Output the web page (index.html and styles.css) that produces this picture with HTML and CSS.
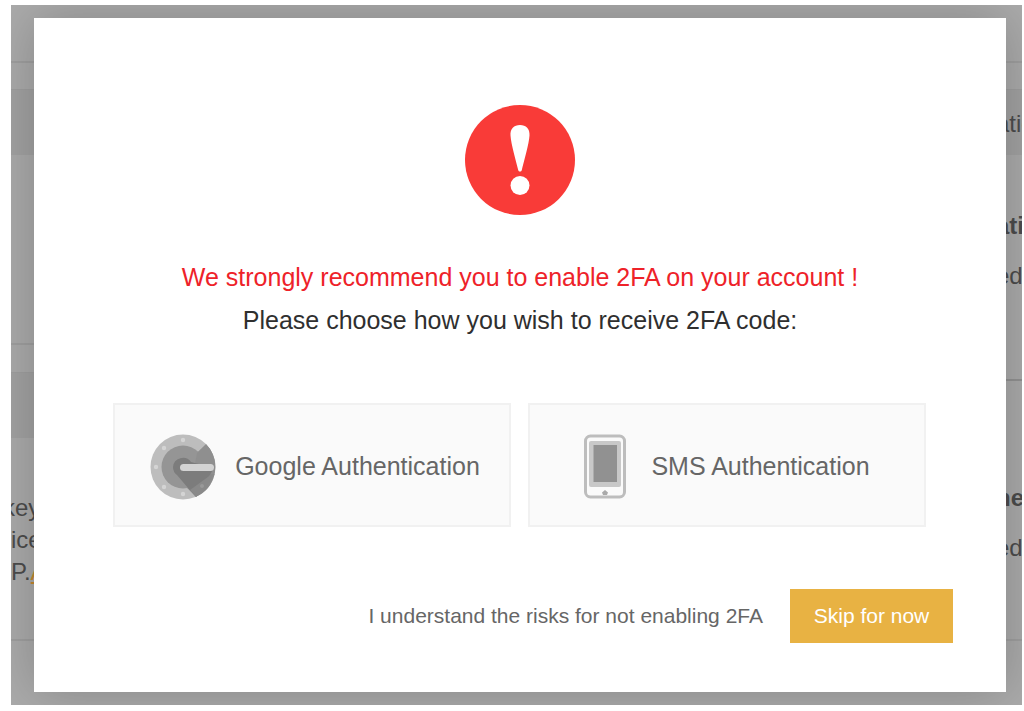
FILE: index.html
```html
<!DOCTYPE html>
<html lang="en">
<head>
<meta charset="utf-8">
<title>Enable 2FA</title>
<link rel="stylesheet" href="styles.css">
</head>
<body>
<div class="screen">
  <div class="page" aria-hidden="true">
    <div class="topbar"></div>
    <div class="column">
      <section class="panel panel-first">
        <div class="panel-head"></div>
      </section>
      <section class="panel panel-second">
        <div class="panel-head"></div>
        <p class="note">key<br>ice<br>P.<span class="note-link">A</span></p>
      </section>
    </div>
    <div class="column column-right">
      <section class="panel">
        <div class="panel-head">ation</div>
        <div class="entry"><b>ation</b><span>ed</span></div>
        <div class="entry entry-last"><b>ne</b><span>ed</span></div>
      </section>
    </div>
  </div>
  <main class="modal" role="dialog" aria-labelledby="title">
    <svg class="alert" viewBox="0 0 110 110" aria-hidden="true">
      <circle cx="55" cy="55" r="55" fill="#f93b38"/>
      <path d="M55 20c6 0 10 4 9.500 10.500C64 39 59 56 56.800 65c-.5 2-3.100 2-3.600 0C51 56 46 39 45.500 30.500 45 24 49 20 55 20z" fill="#fff"/>
      <circle cx="55" cy="80.500" r="9.500" fill="#fff"/>
    </svg>
    <h1 class="title" id="title">We strongly recommend you to enable 2FA on your account !</h1>
    <p class="subtitle">Please choose how you wish to receive 2FA code:</p>
    <div class="options">
      <button class="option" type="button">
        <svg class="icon-google" viewBox="0 0 66 66" aria-hidden="true">
          <circle cx="33" cy="33" r="32.500" fill="#bdbdbd"/>
          <path d="M47 19L56 10.200A32.500 32.500 0 0 1 64 42L46 62.800 33 50z" fill="#8f8f8f"/>
          <path d="M55 40L64.500 40A32.500 32.500 0 0 1 46 62.800L38 54z" fill="#8b8b8b"/>
          <circle cx="33" cy="33" r="21.500" fill="#959595"/>
          <path d="M47 19L56 10.200A32.500 32.500 0 0 1 65 30H45z" fill="#8f8f8f"/>
          <path d="M23 33a10 10 0 0 1 18-5l23 6-6 10-12 18.800L38 54 27 41a10 10 0 0 1-4-8z" fill="#7c7c7c"/>
          <path d="M62 40A32.500 32.500 0 0 1 46 62.800L40 56z" fill="#898989"/>
          <rect x="30" y="30" width="34" height="7" rx="3.500" fill="#d3d3d3"/>
          <g fill="#d4d4d4"><circle cx="33" cy="6" r="2.200"/><circle cx="14" cy="14" r="2.200"/><circle cx="6" cy="33" r="2.200"/><circle cx="14" cy="53" r="2.200"/><circle cx="33" cy="60" r="2.200"/></g>
          <circle cx="52" cy="52" r="2" fill="#999"/>
        </svg>
        <span>Google Authentication</span>
      </button>
      <button class="option option-sms" type="button">
        <svg class="icon-phone" viewBox="0 0 42 66" aria-hidden="true">
          <rect x="1.500" y="2" width="39" height="61" rx="5" fill="#fafafa" stroke="#bdbdbd" stroke-width="3"/>
          <rect x="5" y="7" width="32" height="46" rx="2" fill="#c8c8c8"/>
          <rect x="9.500" y="11" width="23.500" height="37" fill="#919191"/>
          <path d="M18 58.500l3-2.500 3 2.500-1 2.500h-4z" fill="#aaa"/>
        </svg>
        <span>SMS Authentication</span>
      </button>
    </div>
    <div class="actions">
      <span class="risk">I understand the risks for not enabling 2FA</span>
      <button class="skip" type="button">Skip for now</button>
    </div>
  </main>
</div>
</body>
</html>
```
FILE: styles.css
```css
* {
  box-sizing: border-box;
}

body {
  margin: 0;
  padding: 5px 2px 6px 11px;
  background: #fff;
  font-family: "Liberation Sans", Arial, sans-serif;
}

.screen {
  display: grid;
  overflow: hidden;
  background: #ababab;
}

.page,
.modal {
  grid-area: 1 / 1;
}

.page {
  display: grid;
  grid-template-columns: 40px 40px;
  grid-template-rows: 58px 1fr;
  justify-content: space-between;
  color: #4c4c4c;
  font-size: 24px;
  line-height: 32px;
}

.topbar {
  grid-column: 1 / -1;
  border-bottom: 2px solid #9f9f9f;
}

.column {
  padding-top: 26px;
  overflow: hidden;
  white-space: nowrap;
}

.panel {
  border-top: 1px solid #9f9f9f;
  border-bottom: 2px solid #9f9f9f;
}

.panel-first {
  height: 256px;
  margin-bottom: 27px;
}

.panel-second {
  height: 269px;
}

.panel-head {
  height: 65px;
  background: #a2a2a2;
}

.note {
  margin: 54px 0 0;
  text-indent: -8px;
}

.note-link {
  color: #c58a2d;
  text-decoration: underline;
}

.column-right .panel {
  height: 552px;
}

.column-right .panel-head {
  padding: 18px 0 0 14px;
}

.entry {
  display: flex;
  flex-direction: column;
  gap: 18px;
  height: 226px;
  padding: 55px 0 0 14px;
  border-bottom: 2px solid #929292;
}

.entry-last {
  padding-top: 101px;
  border: 0;
}

.modal {
  display: flex;
  flex-direction: column;
  align-items: center;
  margin: 13px 16px 13px 23px;
  padding: 87px 53px 49px 79px;
  background: #fff;
  box-shadow: 0 0 50px rgba(0, 0, 0, 0.22);
}

.alert {
  width: 110px;
  height: 110px;
  margin-right: 26px;
}

.title,
.subtitle {
  margin: 0 26px 0 0;
  color: #2f2f2f;
  font-size: 25px;
  font-weight: 400;
  line-height: 43px;
}

.title {
  margin-top: 41px;
  color: #ee2229;
}

.options {
  display: grid;
  grid-template-columns: 1fr 1fr;
  gap: 17px;
  align-self: stretch;
  margin: 61px 27px 0 0;
}

.option {
  display: flex;
  align-items: center;
  justify-content: center;
  gap: 19px;
  height: 124px;
  padding: 3px 0 0 6px;
  border: 2px solid #f1f1f1;
  background: #fafafa;
  color: #666;
  font: 25px "Liberation Sans", Arial, sans-serif;
}

.option-sms {
  gap: 25px;
  padding-left: 0;
}

.icon-google {
  width: 66px;
  height: 66px;
  flex: none;
}

.icon-phone {
  width: 42px;
  height: 66px;
  flex: none;
}

.actions {
  display: flex;
  align-items: center;
  align-self: stretch;
  justify-content: flex-end;
  gap: 27px;
  margin-top: 62px;
}

.risk {
  color: #666;
  font-size: 21px;
}

.skip {
  width: 163px;
  height: 54px;
  padding: 0;
  border: 0;
  background: #e8b243;
  color: #fff;
  font: 21px "Liberation Sans", Arial, sans-serif;
}
```
